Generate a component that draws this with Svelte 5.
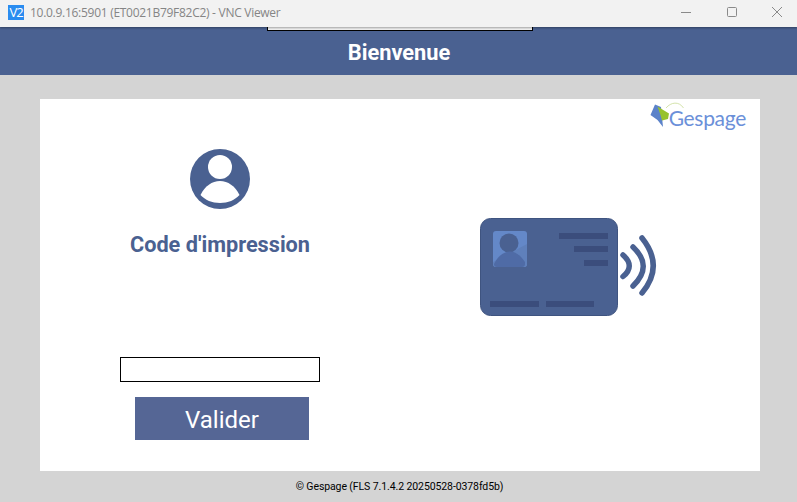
<script lang="ts">
	const title = '10.0.9.16:5901 (ET0021B79F82C2) - VNC Viewer';
	const footer = '© Gespage (FLS 7.1.4.2 20250528-0378fd5b)';
</script>

<div class="window">
	<div class="titlebar">
		<span class="app-icon">V2</span>
		<span class="win-title">{title}</span>
		<div class="controls">
			<svg width="10" height="10" viewBox="0 0 10 10"><path d="M0 5.5h10" stroke="#8a8a8a" fill="none" /></svg>
			<svg width="10" height="10" viewBox="0 0 10 10"><rect x="0.5" y="0.5" width="9" height="9" rx="1" stroke="#8a8a8a" fill="none" /></svg>
			<svg width="10" height="10" viewBox="0 0 10 10"><path d="M0 0l10 10M10 0L0 10" stroke="#8a8a8a" fill="none" /></svg>
		</div>
	</div>

	<header class="header">
		<div class="vnc-bar"></div>
		<h1>Bienvenue</h1>
	</header>

	<main class="panel">
		<div class="logo">
			<svg class="logo-mark" width="36" height="28" viewBox="0 0 36 28">
				<path d="M16 7C21 1 29 0 33.500 7" stroke="#c9dc96" stroke-width="0.8" fill="none" />
				<path d="M0.500 14L5 3.500l6 2.500 2 20-5.500-7z" fill="#5b82c9" />
				<path d="M7.500 5.500L19 12.500l-1 5.500-6 1.500-2-7z" fill="#97c22d" />
			</svg>
			<span class="logo-text">Gespage</span>
		</div>

		<section class="code">
			<svg class="avatar" width="60" height="60" viewBox="0 0 60 60">
				<circle cx="30" cy="30" r="30" fill="#4a6191" />
				<circle cx="30" cy="18" r="12" fill="#fff" />
				<path d="M10.500 46C15 37 22 32 30 32s15 5 19.500 14C45 51 38 54 30 54s-15-3-19.500-8z" fill="#fff" />
			</svg>
			<h2>Code d'impression</h2>
			<input class="field" type="text" aria-label="Code d'impression" />
			<button class="submit" type="button">Valider</button>
		</section>

		<section class="badge">
			<svg width="180" height="100" viewBox="0 0 180 100">
				<rect x="0.500" y="0.500" width="137" height="97" rx="10" fill="#4a6191" stroke="#3f5480" />
				<rect x="13" y="13" width="34" height="36" rx="3" fill="#6488c8" />
				<path d="M47 26v20a3 3 0 0 1-3 3H16a3 3 0 0 1-3-3v-2z" fill="#5f80bb" />
				<circle cx="29" cy="25" r="9.500" fill="#4a6191" />
				<path d="M14 46C18 38 24 33.500 30 33.500S41 38 45 44v2a3 3 0 0 1-3 3H17a3 3 0 0 1-3-3z" fill="#4f6ba6" />
				<rect x="79" y="15" width="49" height="6" fill="#3b4d7c" />
				<rect x="94" y="28" width="34" height="6" fill="#3b4d7c" />
				<rect x="104" y="42" width="24" height="6" fill="#3b4d7c" />
				<rect x="10" y="83" width="49" height="6" fill="#3b4d7c" />
				<rect x="66" y="83" width="48" height="6" fill="#3b4d7c" />
				<g stroke="#4a6191" stroke-width="5.500" stroke-linecap="round" fill="none">
					<path d="M143 37Q155.500 48 143 58.500" />
					<path d="M153 29Q173.500 48 153 68" />
					<path d="M162 20Q184.500 48 162 75" />
				</g>
			</svg>
		</section>
	</main>

	<footer class="footer">{footer}</footer>
</div>

<style>
	:global(body) {
		margin: 0;
		background: #d4d4d4;
	}

	.window {
		position: relative;
		width: 797px;
		height: 502px;
		overflow: hidden;
		display: flex;
		flex-direction: column;
		background: #d4d4d4;
		font-family: Roboto, sans-serif;
	}

	.titlebar {
		position: relative;
		z-index: 2;
		height: 27px;
		flex: none;
		display: flex;
		align-items: center;
		background: #f2f2f2;
		box-shadow: 0 1px 2px rgba(0, 0, 0, 0.35);
		padding-left: 8px;
		box-sizing: border-box;
	}

	.app-icon {
		width: 16px;
		height: 15px;
		margin: -3px 6px 0 0;
		background: #2a8cf0;
		color: #fff;
		font: 13px/15px 'Open Sans', sans-serif;
		letter-spacing: -1px;
		text-align: center;
	}

	.win-title {
		margin-top: -2px;
		font: 12px 'Open Sans', sans-serif;
		color: #858585;
		letter-spacing: -0.28px;
	}

	.controls {
		margin-left: auto;
		display: flex;
		gap: 35.500px;
		padding-right: 15px;
		margin-top: -4px;
	}

	.header {
		position: relative;
		height: 48px;
		flex: none;
		display: flex;
		align-items: center;
		justify-content: center;
		background: #4a6191;
	}

	.vnc-bar {
		position: absolute;
		left: 267px;
		top: 0;
		width: 266px;
		height: 4px;
		box-sizing: border-box;
		background: #f2f2f2;
		border: 1px solid #000;
		border-top: none;
	}

	h1 {
		margin: 2px 0 0 1px;
		font-size: 21.800px;
		font-weight: 700;
		color: #fff;
	}

	.panel {
		position: relative;
		margin: 24px 37px 0 40px;
		height: 372px;
		flex: none;
		display: flex;
		background: #fff;
	}

	.logo {
		position: absolute;
		top: 2px;
		right: 14px;
		display: flex;
		align-items: flex-end;
	}

	.logo-mark {
		margin-right: -17px;
		margin-bottom: 3px;
	}

	.logo-text {
		font: 400 21px Lato, sans-serif;
		color: #6b90d9;
		line-height: 28px;
		letter-spacing: -0.3px;
	}

	.code {
		width: 360px;
		display: flex;
		flex-direction: column;
		align-items: center;
		padding-top: 50px;
		box-sizing: border-box;
	}

	h2 {
		margin: 22px 0 0;
		font-size: 21.700px;
		line-height: 28px;
		font-weight: 700;
		color: #4a6191;
	}

	.field {
		margin-top: 98px;
		width: 200px;
		height: 25px;
		box-sizing: border-box;
		border: 1px solid #000;
		background: #fff;
		padding: 0;
	}

	.submit {
		margin-top: 15px;
		margin-left: 4px;
		width: 174px;
		height: 43px;
		border: none;
		background: #556695;
		color: #fff;
		font: 24px Roboto, sans-serif;
		padding: 2px 0 0;
	}

	.badge {
		padding: 119px 0 0 80px;
	}

	.badge svg {
		display: block;
	}

	.footer {
		flex: 1;
		display: flex;
		align-items: center;
		justify-content: center;
		font: 10.500px Roboto, sans-serif;
		color: #000;
		padding-left: 2px;
		letter-spacing: -0.1px;
	}
</style>
